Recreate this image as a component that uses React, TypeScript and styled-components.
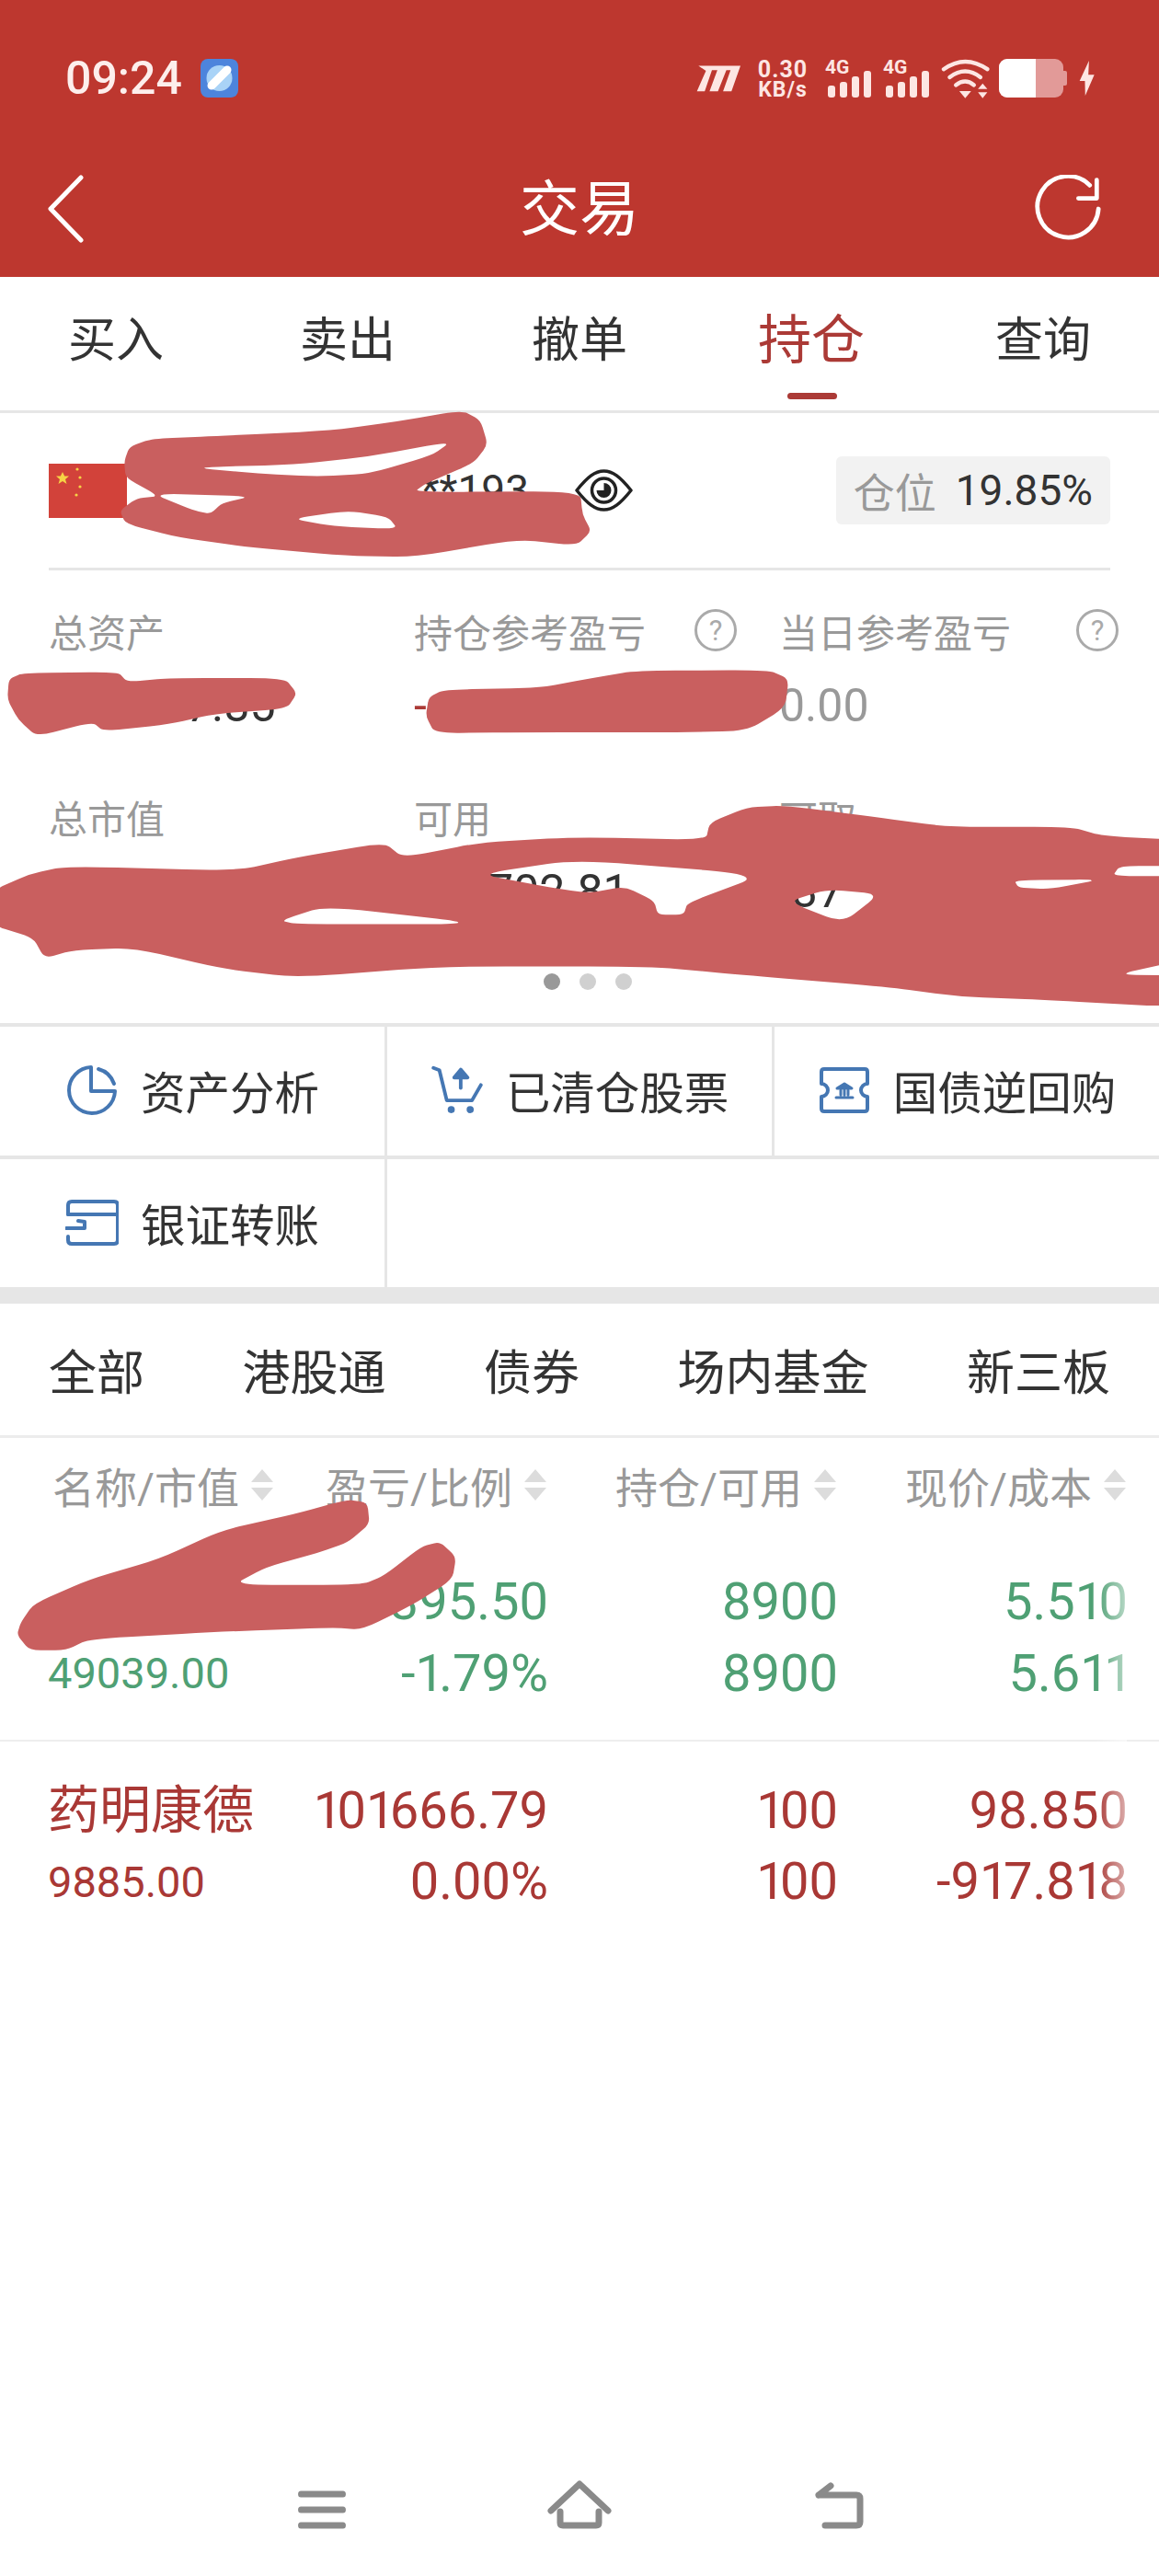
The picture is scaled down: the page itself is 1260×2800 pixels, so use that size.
import React from 'react';
import styled, { createGlobalStyle } from 'styled-components';

const RED = '#bd372f';
const ACTIVE = '#ab3a36';
const BLUE = '#4577b3';
const LINE = '#e6e6e6';
const FONT = 'Roboto, "Noto Sans CJK SC", sans-serif';

const GlobalStyle = createGlobalStyle`
  html, body {
    margin: 0;
    padding: 0;
    background: #fff;
    font-family: ${FONT};
  }
  * {
    box-sizing: border-box;
  }
`;

// closed outline through a point list, corners rounded off
const blob = (pts: number[][]) => {
  const toward = (a: number[], b: number[]) => `${a[0] + (b[0] - a[0]) * 0.3} ${a[1] + (b[1] - a[1]) * 0.3}`;
  let d = '';
  pts.forEach((p, i) => {
    const prev = pts[(i + pts.length - 1) % pts.length];
    const next = pts[(i + 1) % pts.length];
    d += `${i === 0 ? 'M' : 'L'}${toward(p, prev)}Q${p[0]} ${p[1]} ${toward(p, next)}`;
  });
  return d + 'Z';
};

const scribbleTop = [
  blob([[168,160],[175,125],[205,105],[300,98],[450,85],[540,62],[625,36],[650,60],[660,120],[640,165],[575,215],[560,235],[785,233],[788,290],[800,330],[780,365],[700,350],[560,393],[470,390],[340,370],[240,345],[170,312],[162,280],[185,250],[215,245],[170,200]]),
  blob([[260,175],[400,168],[500,148],[610,112],[585,145],[500,190],[430,197],[350,190]]),
  blob([[205,238],[340,245],[300,262],[285,288],[262,280]]),
  blob([[395,300],[470,280],[525,295],[538,325],[450,318]]),
].join('');

const scribbleAssets = blob([[12,690],[30,676],[160,673],[172,697],[230,688],[385,688],[402,725],[388,762],[290,775],[230,800],[140,817],[125,795],[50,830],[25,790],[10,740]]);
const scribbleProfit = blob([[580,735],[600,716],[730,712],[800,688],[860,670],[1040,668],[1067,690],[1062,760],[1010,817],[900,820],[700,820],[588,822],[576,780]]);

const scribbleWide = [
  blob([[-10,1205],[40,1165],[90,1146],[320,1157],[400,1125],[520,1088],[545,1125],[650,1088],[780,1075],[955,1082],[960,1040],[1010,1003],[1060,998],[1180,1025],[1280,1050],[1450,1050],[1490,1072],[1600,1082],[1600,1145],[1515,1145],[1505,1170],[1600,1170],[1600,1375],[1510,1410],[1600,1412],[1600,1490],[1400,1470],[1300,1464],[1200,1440],[1000,1410],[880,1390],[600,1390],[400,1417],[300,1395],[180,1345],[100,1350],[60,1370],[45,1320],[-10,1290]]),
  blob([[650,1165],[780,1130],[1032,1167],[930,1235],[925,1264],[890,1264],[885,1230],[845,1195],[795,1212],[720,1190]]),
  blob([[1066,1232],[1120,1202],[1190,1214],[1140,1284]]),
  blob([[380,1278],[440,1243],[655,1287],[400,1287]]),
  blob([[1372,1180],[1490,1178],[1420,1202],[1378,1198]]),
].join('');

const scribbleRow = blob([[470,470],[497,478],[500,530],[470,575],[430,600],[360,635],[315,678],[490,678],[520,655],[570,585],[595,573],[617,610],[612,665],[560,725],[490,787],[450,782],[300,792],[120,810],[90,837],[40,837],[23,800],[28,770],[45,725],[120,665],[215,615],[300,545],[400,505]]);

const Page = styled.div`
  position: relative;
  display: flex;
  flex-direction: column;
  width: 1260px;
  height: 2800px;
  overflow: hidden;
  background: #fff;
  color: #333;
`;

const Header = styled.header`
  height: 301px;
  background: ${RED};
  color: #fff;
`;

const StatusBar = styled.div`
  display: flex;
  align-items: center;
  height: 170px;
  padding: 0 70px 0 71px;
`;

const Clock = styled.span`
  margin-right: 20px;
  font-size: 50px;
  font-weight: 500;
  line-height: 1;
  color: #fdeeec;
`;

const StatusIcons = styled.div`
  display: flex;
  align-items: center;
  gap: 13px;
  margin-left: auto;
`;

const NetSpeed = styled.div`
  display: flex;
  flex-direction: column;
  align-items: center;
  width: 54px;
  margin: 0 6px 0 5px;
  font-weight: 700;
  color: #fde6e3;
`;

const NetValue = styled.span`
  font-size: 25px;
  line-height: 25px;
  letter-spacing: 1px;
`;

const NetUnit = styled.span`
  font-size: 23px;
  line-height: 20px;
  letter-spacing: 1px;
`;

const SignalBox = styled.div`
  position: relative;
  width: 50px;
  height: 42px;
`;

const SignalLabel = styled.span`
  position: absolute;
  top: -3px;
  left: 0;
  font-size: 21px;
  font-weight: 700;
  line-height: 24px;
  color: #fde6e3;
`;

const Battery = styled.svg`
  width: 74px;
  height: 42px;
  margin-left: -3px;
`;

const NavBar = styled.div`
  display: grid;
  grid-template-columns: 1fr auto 1fr;
  align-items: center;
  height: 131px;
  padding: 0 62px 18px;
`;

const NavBack = styled.svg`
  width: 44px;
  height: 76px;
  margin-left: -12px;
  fill: none;
  stroke: #fff;
  stroke-width: 5;
  stroke-linecap: round;
  stroke-linejoin: round;
`;

const NavTitle = styled.h1`
  margin: 4px 0 0;
  font-size: 65px;
  font-weight: 400;
  line-height: 1;
`;

const NavRefresh = styled.svg`
  justify-self: end;
  width: 74px;
  height: 74px;
  fill: none;
  stroke: #fff;
  stroke-width: 5;
  stroke-linecap: round;
  stroke-linejoin: round;
`;

const MainTabs = styled.nav`
  display: grid;
  grid-template-columns: repeat(5, 252px);
  height: 148px;
  border-bottom: 3px solid ${LINE};
`;

const MainTab = styled.div<{ $active?: boolean }>`
  position: relative;
  display: flex;
  align-items: center;
  justify-content: center;
  padding-bottom: 17px;
  font-size: ${p => (p.$active ? 58 : 52)}px;
  color: ${p => (p.$active ? ACTIVE : '#333')};
  ${p =>
    p.$active &&
    `
    &::after {
      content: '';
      position: absolute;
      left: 100px;
      bottom: 12px;
      width: 54px;
      height: 7px;
      border-radius: 4px;
      background: ${ACTIVE};
    }
  `}
`;

const AccountRow = styled.div`
  display: flex;
  align-items: center;
  height: 171px;
  margin: 0 53px;
  border-bottom: 3px solid ${LINE};
`;

const Flag = styled.svg`
  width: 85px;
  height: 59px;
  flex: none;
`;

const AccountName = styled.span`
  width: 437px;
  margin-right: 50px;
  text-align: right;
  font-size: 46px;
  line-height: 1;
`;

const PositionBadge = styled.div`
  display: flex;
  align-items: center;
  gap: 21px;
  height: 74px;
  margin-left: auto;
  padding: 0 19px;
  border-radius: 6px;
  background: #f2f2f2;
  font-size: 46px;
  color: #333;
`;

const BadgeLabel = styled.span`
  font-size: 45px;
  color: #999;
`;

const Stats = styled.section`
  position: relative;
  display: grid;
  grid-template-columns: repeat(3, 397px);
  align-content: start;
  row-gap: 60px;
  height: 492px;
  padding: 35px 0 0 53px;
`;

const Stat = styled.div`
  display: flex;
  flex-direction: column;
  gap: 22px;
`;

const StatLabel = styled.div`
  display: flex;
  align-items: center;
  height: 60px;
  font-size: 42px;
  color: #999;
`;

const Help = styled.span<{ $offset: number }>`
  display: flex;
  align-items: center;
  justify-content: center;
  width: 46px;
  height: 46px;
  margin-left: ${p => p.$offset}px;
  border: 3px solid #aaa;
  border-radius: 50%;
  font-size: 31px;
  color: #aaa;
`;

const StatValue = styled.div<{ $indent?: number; $tone?: string }>`
  height: 60px;
  padding-left: ${p => p.$indent || 0}px;
  font-size: 50px;
  line-height: 60px;
  color: ${p => p.$tone || '#333'};
`;

const Dots = styled.div`
  position: absolute;
  left: 591px;
  bottom: 36px;
  display: flex;
  gap: 21px;
`;

const Dot = styled.span<{ $on?: boolean }>`
  width: 18px;
  height: 18px;
  border-radius: 50%;
  background: ${p => (p.$on ? '#999' : '#d0d0d0')};
`;

const Actions = styled.section`
  display: grid;
  grid-template-columns: repeat(3, 1fr);
  grid-template-rows: 140px 139px;
  column-gap: 3px;
  row-gap: 4px;
  border-top: 4px solid ${LINE};
  border-bottom: 18px solid ${LINE};
  background: ${LINE};
`;

const Action = styled.div<{ $span?: number }>`
  display: flex;
  align-items: center;
  justify-content: center;
  gap: 24px;
  padding-bottom: 2px;
  background: #fff;
  font-size: 48.500px;
  grid-column: span ${p => p.$span || 1};
`;

const ActionIcon = styled.svg`
  width: 58px;
  height: 56px;
  flex: none;
  fill: none;
  stroke: ${BLUE};
  stroke-width: 4;
  stroke-linecap: round;
  stroke-linejoin: round;
`;

const SubTabs = styled.nav`
  display: flex;
  align-items: center;
  justify-content: space-between;
  height: 146px;
  padding: 0 53px;
  border-bottom: 3px solid #ececec;
  font-size: 52px;
`;

const TableHead = styled.div`
  display: grid;
  grid-template-columns: 247px 293px 315px 315px;
  align-items: center;
  height: 106px;
  padding: 0 0 4px 54px;
  font-size: 46px;
  color: #999;
`;

const HeadCell = styled.div<{ $first?: boolean }>`
  display: flex;
  align-items: center;
  justify-content: ${p => (p.$first ? 'flex-start' : 'flex-end')};
  gap: 13px;
  padding-left: ${p => (p.$first ? 3 : 0)}px;
  white-space: nowrap;
`;

const SortMark = styled.svg`
  width: 24px;
  height: 34px;
  flex: none;
  fill: #dcdcdc;
`;

const TableBody = styled.div`
  position: relative;
`;

const Line = styled.span<{ $size?: number }>`
  font-size: ${p => p.$size || 56}px;
`;

const Holding = styled.div<{ $tone: string; $divider?: boolean; $top: number; $step: number }>`
  display: grid;
  grid-template-columns: 251px 293px 315px 315px;
  height: ${p => (p.$divider ? 224 : 200)}px;
  padding: ${p => p.$top}px 0 0 52px;
  color: ${p => p.$tone};
  border-bottom: ${p => (p.$divider ? '2px solid #eee' : 'none')};

  ${Line} {
    height: ${p => p.$step}px;
    line-height: ${p => p.$step}px;
  }
`;

const HoldingCell = styled.div<{ $left?: boolean }>`
  display: flex;
  flex-direction: column;
  align-items: ${p => (p.$left ? 'flex-start' : 'flex-end')};
  white-space: nowrap;
`;

// the reference's digit 1 is narrower than the other digits
const NarrowOne = styled.span`
  letter-spacing: -0.1em;
`;

const FadeEdge = styled.div`
  position: absolute;
  top: 0;
  right: 35px;
  bottom: 0;
  width: 34px;
  background: linear-gradient(90deg, rgba(255, 255, 255, 0), rgba(255, 255, 255, 0.6));
`;

const BottomNav = styled.footer`
  display: grid;
  grid-template-columns: repeat(3, 280px);
  justify-content: center;
  align-items: center;
  height: 140px;
  margin-top: auto;
  padding-bottom: 5px;
`;

const NavIcon = styled.svg`
  justify-self: center;
  width: 90px;
  height: 60px;
  overflow: visible;
  fill: none;
  stroke: #8a8a8a;
  stroke-width: 7;
  stroke-linecap: round;
  stroke-linejoin: round;
`;

const ScribbleLayer = styled.svg`
  position: absolute;
  top: 0;
  left: 0;
  width: 1260px;
  height: 2800px;
  pointer-events: none;
  fill: #c95f5f;
  fill-rule: evenodd;
`;

const Signal = () => (
  <SignalBox>
    <SignalLabel>4G</SignalLabel>
    <svg width="50" height="42" viewBox="0 0 50 42" fill="#fde6e3">
      <rect x="3" y="29" width="8" height="13" rx="3" />
      <rect x="16" y="25" width="8" height="17" rx="3" />
      <rect x="29" y="19" width="8" height="23" rx="3" />
      <rect x="42" y="13" width="8" height="29" rx="3" />
    </svg>
  </SignalBox>
);

const SortIcon = () => (
  <SortMark viewBox="0 0 24 34">
    <polygon points="12,0 24,14 0,14" />
    <polygon points="0,20 24,20 12,34" />
  </SortMark>
);

const Digits = ({ value }: { value: string }) => (
  <>
    {value.split(/(1)/).map((part, i) =>
      part === '1' ? <NarrowOne key={i}>1</NarrowOne> : part
    )}
  </>
);

const tabs = ['买入', '卖出', '撤单', '持仓', '查询'];
const subTabs = ['全部', '港股通', '债券', '场内基金', '新三板'];
const columns = ['名称/市值', '盈亏/比例', '持仓/可用', '现价/成本'];

const App = () => {
  return (
    <Page>
      <GlobalStyle />
      <Header>
        <StatusBar>
          <Clock>09:24</Clock>
          <svg width="41" height="42" viewBox="0 0 41 42">
            <rect width="41" height="42" rx="8" fill="#4d84dc" />
            <circle cx="20.5" cy="21" r="14" fill="#a9d3f7" />
            <path d="M12 29 L29 12" stroke="#fff" strokeWidth="9" strokeLinecap="round" />
          </svg>
          <StatusIcons>
            <svg width="49" height="29" viewBox="108 92 150 88" fill="#fde6e3">
              <path d="M115 93H255L225 178H197L222 108H208L180 178H152L178 108H160L136 178H110L140 110Z" />
            </svg>
            <NetSpeed>
              <NetValue>0.30</NetValue>
              <NetUnit>KB/s</NetUnit>
            </NetSpeed>
            <Signal />
            <Signal />
            <svg width="53" height="44" viewBox="880 68 155 130">
              <g fill="none" stroke="#fde6e3" strokeWidth="13" strokeLinecap="round">
                <path d="M888 104Q957 55 1028 104" />
                <path d="M907 130Q957 92 1006 130" />
                <path d="M927 155Q957 132 985 155" />
              </g>
              <g fill="#fde6e3">
                <polygon points="938,174 976,174 957,197" />
                <polygon points="998,168 1028,168 1013,150" />
                <polygon points="998,178 1028,178 1013,197" />
              </g>
            </svg>
            <Battery viewBox="0 0 74 42">
              <rect width="70" height="42" rx="9" fill="#e29a98" />
              <rect x="68" y="13" width="6" height="16" rx="2" fill="#e29a98" />
              <path d="M9 0H40V42H9a9 9 0 0 1-9-9V9a9 9 0 0 1 9-9z" fill="#fff" />
            </Battery>
            <svg width="17" height="40" viewBox="1313 83 50 116" fill="#fde6e3">
              <polygon points="1345,85 1315,150 1332,150 1333,197 1362,130 1343,130" />
            </svg>
          </StatusIcons>
        </StatusBar>
        <NavBar>
          <NavBack viewBox="0 0 44 76">
            <path d="M38 4L5 38L38 72" />
          </NavBack>
          <NavTitle>交易</NavTitle>
          <NavRefresh viewBox="0 0 78 78">
            <path d="M64 12A35 35 0 1 0 74 39" />
            <path d="M72 6V27H51" />
          </NavRefresh>
        </NavBar>
      </Header>

      <MainTabs>
        {tabs.map(tab => (
          <MainTab key={tab} $active={tab === '持仓'}>{tab}</MainTab>
        ))}
      </MainTabs>

      <AccountRow>
        <Flag viewBox="0 0 85 59">
          <rect width="85" height="59" fill="#d2423a" />
          <polygon points="15,9 17.200,13.500 22,13.500 18,17 19.500,22 15,19 10.500,22 12,17 8,13.500 12.800,13.500" fill="#f6d345" />
          <circle cx="31" cy="6" r="1.600" fill="#f6d345" />
          <circle cx="34" cy="15" r="1.600" fill="#f6d345" />
          <circle cx="34" cy="25" r="1.600" fill="#f6d345" />
          <circle cx="30" cy="34" r="1.600" fill="#f6d345" />
        </Flag>
        <AccountName>**193</AccountName>
        <svg width="63" height="46" viewBox="0 0 63 46" fill="none" stroke="#222" strokeWidth="3.500">
          <path d="M2 23C14 8 22 2 31.500 2S49 8 61 23C49 38 41 44 31.500 44S14 38 2 23Z" strokeLinejoin="round" />
          <circle cx="31.500" cy="23" r="13" />
          <path d="M31.500 15V23H23.500A8 8 0 1 0 31.500 15Z" fill="#222" stroke="none" />
        </svg>
        <PositionBadge>
          <BadgeLabel>仓位</BadgeLabel>
          <span>19.85%</span>
        </PositionBadge>
      </AccountRow>

      <Stats>
        <Stat>
          <StatLabel>总资产</StatLabel>
          <StatValue $indent={149}>7.85</StatValue>
        </Stat>
        <Stat>
          <StatLabel>持仓参考盈亏<Help $offset={53}>?</Help></StatLabel>
          <StatValue $tone={ACTIVE}>-</StatValue>
        </Stat>
        <Stat>
          <StatLabel>当日参考盈亏<Help $offset={71}>?</Help></StatLabel>
          <StatValue $tone="#999">0.00</StatValue>
        </Stat>
        <Stat>
          <StatLabel>总市值</StatLabel>
          <StatValue />
        </Stat>
        <Stat>
          <StatLabel>可用</StatLabel>
          <StatValue $indent={80}>702.81</StatValue>
        </Stat>
        <Stat>
          <StatLabel>可取</StatLabel>
          <StatValue $indent={14}>37</StatValue>
        </Stat>
        <Dots>
          <Dot $on />
          <Dot />
          <Dot />
        </Dots>
      </Stats>

      <Actions>
        <Action>
          <ActionIcon viewBox="0 0 58 56">
            <path d="M28 3A25 25 0 1 0 54 29H28V3" />
            <path d="M36 5A25 25 0 0 1 53 21" />
          </ActionIcon>
          资产分析
        </Action>
        <Action>
          <ActionIcon viewBox="210 115 180 165" style={{ strokeWidth: 12 }}>
            <path d="M220 122L240 130L265 232H350L380 180" />
            <path d="M312 190V145" />
            <polygon points="290,155 312,128 335,155" fill={BLUE} />
            <circle cx="280" cy="263" r="6" fill={BLUE} />
            <circle cx="344" cy="263" r="6" fill={BLUE} />
          </ActionIcon>
          已清仓股票
        </Action>
        <Action>
          <ActionIcon viewBox="0 0 58 56">
            <path d="M4 8Q4 5 7 5H51Q54 5 54 8V21A7 7 0 0 0 54 35V48Q54 51 51 51H7Q4 51 4 48V35A7 7 0 0 0 4 21Z" />
            <path d="M21 26L29 21L37 26Z" fill={BLUE} strokeWidth="3" />
            <path d="M20 36H38M25 28V33M29 28V33M33 28V33" strokeWidth="3" />
          </ActionIcon>
          国债逆回购
        </Action>
        <Action>
          <ActionIcon viewBox="0 0 58 56">
            <path d="M3 19V9Q3 5 7 5H53Q57 5 57 9V47Q57 51 53 51H7Q3 51 3 47V43" />
            <path d="M3 19H57" />
            <path d="M1 34H21L21 27L14 26" />
          </ActionIcon>
          银证转账
        </Action>
        <Action $span={2} />
      </Actions>

      <SubTabs>
        {subTabs.map(tab => (
          <span key={tab}>{tab}</span>
        ))}
      </SubTabs>

      <TableHead>
        {columns.map((col, i) => (
          <HeadCell key={col} $first={i === 0}>
            {col}
            <SortIcon />
          </HeadCell>
        ))}
      </TableHead>

      <TableBody>
        <Holding $tone="#4fa074" $divider $top={33} $step={78}>
          <HoldingCell $left>
            <Line $size={55}>&nbsp;</Line>
            <Line $size={47}>49039.00</Line>
          </HoldingCell>
          <HoldingCell>
            <Line>395.50</Line>
            <Line><Digits value="-1.79%" /></Line>
          </HoldingCell>
          <HoldingCell>
            <Line>8900</Line>
            <Line>8900</Line>
          </HoldingCell>
          <HoldingCell>
            <Line><Digits value="5.510" /></Line>
            <Line><Digits value="5.611" /></Line>
          </HoldingCell>
        </Holding>
        <Holding $tone="#a93835" $top={37} $step={77}>
          <HoldingCell $left>
            <Line $size={56}>药明康德</Line>
            <Line $size={47}>9885.00</Line>
          </HoldingCell>
          <HoldingCell>
            <Line><Digits value="101666.79" /></Line>
            <Line>0.00%</Line>
          </HoldingCell>
          <HoldingCell>
            <Line><Digits value="100" /></Line>
            <Line><Digits value="100" /></Line>
          </HoldingCell>
          <HoldingCell>
            <Line>98.850</Line>
            <Line><Digits value="-917.818" /></Line>
          </HoldingCell>
        </Holding>
        <FadeEdge />
      </TableBody>

      <BottomNav>
        <NavIcon viewBox="0 0 90 60">
          <path d="M19 13H71M19 30H71M19 47H71" transform="translate(45 0) scale(0.88 1) translate(-45 0)" />
        </NavIcon>
        <NavIcon viewBox="0 0 90 60">
          <path d="M14 27L45 -2L76 27" transform="translate(0 4)" />
          <path d="M24 32V44Q24 47 27 47H63Q66 47 66 44V32" />
        </NavIcon>
        <NavIcon viewBox="0 0 90 60">
          <path d="M25 14L38 4M25 14H66Q70 14 70 18V43Q70 47 66 47H32" />
        </NavIcon>
      </BottomNav>

      <ScribbleLayer viewBox="0 0 1260 2800">
        <g transform="translate(0 430) scale(0.8036 0.4464)">
          <path d={scribbleTop} />
          <path d={scribbleAssets} />
          <path d={scribbleProfit} />
          <path d={scribbleWide} />
        </g>
        <g transform="translate(0 1420) scale(0.8036 0.4464)">
          <path d={scribbleRow} />
        </g>
      </ScribbleLayer>
    </Page>
  );
};

export default App;
